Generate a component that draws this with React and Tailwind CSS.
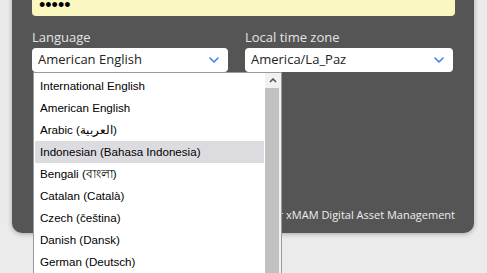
import React from 'react';

const languages = [
  'International English',
  'American English',
  'Arabic (العربية)',
  'Indonesian (Bahasa Indonesia)',
  'Bengali (বাংলা)',
  'Catalan (Català)',
  'Czech (čeština)',
  'Danish (Dansk)',
  'German (Deutsch)',
  'Greek (Ελληνικά)',
];

function Chevron() {
  return (
    <svg width="10" height="6" viewBox="0 0 10 6" className="shrink-0">
      <polyline points="1,1 5,5 9,1" fill="none" stroke="#3b82f6" strokeWidth="1.6" strokeLinecap="round" strokeLinejoin="round" />
    </svg>
  );
}

function Select({ value }) {
  return (
    <div className="h-[24px] rounded-[4px] bg-white flex items-center justify-between pl-[6px] pr-[9px] text-[13px] text-[#222]">
      <span>{value}</span>
      <Chevron />
    </div>
  );
}

export default function App() {
  return (
    <div className="min-h-screen overflow-hidden bg-[#ebebeb] px-[12px] font-['Open_Sans',sans-serif]">
      <div className="-mt-[34px] w-[462px] rounded-[10px] bg-[#555555] pt-[20px] pb-[10px] pl-[20px] pr-[19px] shadow-[0_1px_5px_rgba(0,0,0,0.3)]">
        {/* password */}
        <div className="h-[30px] rounded-[4px] bg-[#fbf7c0] flex items-center pt-[9px] pl-[7px] font-['Liberation_Sans',Arial,sans-serif] text-[18px] leading-[11px] text-black">
          •••••
        </div>

        <div className="mt-[13px] flex gap-[17px]">
          <div className="relative w-[196px]">
            <div className="mb-[3px] text-[13px] leading-[16px] text-[#e4e4e4]">Language</div>
            <Select value="American English" />

            {/* open native list */}
            <div className="absolute left-[1px] top-[43px] z-10 flex w-[249px] border border-[#9a9a9a] bg-white">
              <div className="flex-1 px-[1px] pt-[2px] font-['Liberation_Sans',Arial,sans-serif] text-[11.6px] text-black">
                {languages.map((l, i) => (
                  <div
                    key={l}
                    className={`h-[22px] flex items-center px-[5px] ${i === 3 ? 'bg-[#dcdce0]' : ''}`}
                  >
                    {l}
                  </div>
                ))}
              </div>
              <div className="w-[16px] bg-[#f1f1f1] flex flex-col">
                <div className="h-[15px] flex items-center justify-center">
                  <svg width="8" height="5" viewBox="0 0 8 5">
                    <polyline points="1,4 4,1 7,4" fill="none" stroke="#505050" strokeWidth="1.5" />
                  </svg>
                </div>
                <div className="w-[14px] h-[220px] bg-[#c1c1c1]" />
              </div>
            </div>
          </div>

          <div className="w-[208px]">
            <div className="mb-[3px] text-[13px] leading-[16px] text-[#e4e4e4]">Local time zone</div>
            <Select value="America/La_Paz" />
          </div>
        </div>

        <div className="mt-[135px] text-right text-[11px] leading-[16px] text-[#eeeeee]">
          Web client for xMAM Digital Asset Management
        </div>
      </div>
    </div>
  );
}
